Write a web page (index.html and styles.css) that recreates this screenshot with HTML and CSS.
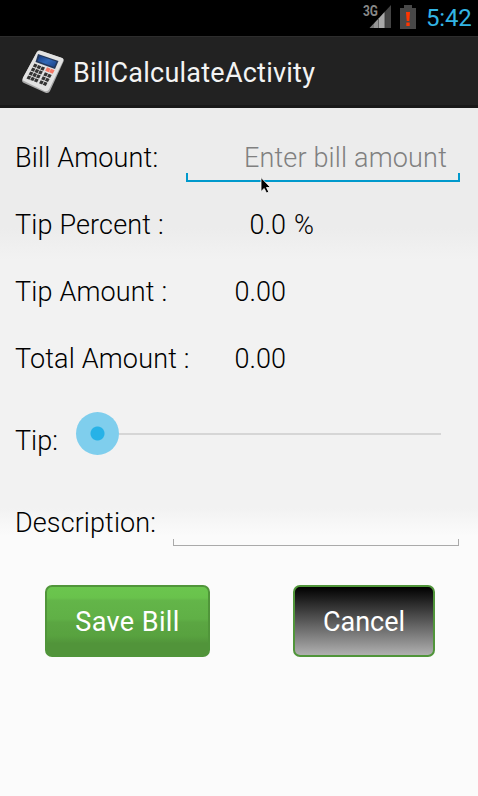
FILE: index.html
```html
<!DOCTYPE html>
<html lang="en">
<head>
<meta charset="utf-8">
<title>BillCalculateActivity</title>
<link rel="stylesheet" href="styles.css">
</head>
<body>
<header class="status">
  <svg class="signal" width="28" height="24" viewBox="0 0 28 24">
    <path d="M6.500 24 11 19.300V24Z" fill="#777"/><path d="M11 19.300 16 14V24H11Z" fill="#959595"/><path d="M16 14 21 8.500V24H16Z" fill="#a8a8a8"/><path d="M21 8.500 22.500 7V24H21Z" fill="#777"/><path d="M15 15 16 14V24H15Z" fill="#666"/><path d="M22.500 7 28 1V24H22.500Z" fill="#444"/>
    <text x="0" y="11.500" textLength="15" lengthAdjust="spacingAndGlyphs">3G</text>
  </svg>
  <svg class="battery" width="16" height="24" viewBox="0 0 16 24">
    <path d="M4 0H12V3H16V24H0V3H4Z" fill="#484848"/><path d="M6 7H10L9.300 16H6.700Z" fill="#ff3500"/><rect x="6.300" y="17.500" width="3.400" height="3.500" fill="#ff3500"/>
  </svg>
  <span class="clock">5:42</span>
</header>
<div class="bar">
  <svg class="logo" width="44" height="46" viewBox="0 0 44 46">
    <defs><linearGradient id="lcd" x2="1" y2="1"><stop offset="0" stop-color="#153a80"/><stop offset=".5" stop-color="#3269b8"/><stop offset="1" stop-color="#193f86"/></linearGradient></defs>
    <path d="M15.500 3.500Q17 1 20 2L41 9Q43.500 10 42.500 12.500L29 42Q27.500 45 24 43.500L3 34Q0 32.500 1.500 30Z" fill="#aaa"/>
    <path d="M16 3Q17 1 20 1.700L40.500 8.700Q43 9.700 42 12L28 40.500Q26.500 43 23.500 42L3 32Q1 31 2 28.500Z" fill="#e2e2e2"/>
    <path d="M17 5 37.500 12 34 20 14.500 13Z" fill="#24395c"/>
    <path d="M18.800 6.800 35.500 12.800 33 18 16.500 12Z" fill="url(#lcd)"/>
    <g transform="matrix(.93 .36 -.47 .88 13.500 14.500)" fill="#333">
      <path d="M0 0h3.300v3.500h-3.300zM4 0h3.300v3.500h-3.300zM8 0h3.300v3.500h-3.300zM0 4.500h3.300v3.500h-3.300zM4 4.500h3.300v3.500h-3.300zM8 4.500h3.300v3.500h-3.300zM0 9h3.300v3.500h-3.300zM4 9h3.300v3.500h-3.300zM8 9h3.300v3.500h-3.300zM0 13.500h3.300v3.500h-3.300zM4 13.500h3.300v3.500h-3.300zM8 13.500h3.300v3.500h-3.300zM13.500 4.500h3.300v3.500h-3.300zM17.500 4.500h3.300v3.500h-3.300zM13.500 9h3.300v3.500h-3.300zM17.500 9h3.300v3.500h-3.300zM13.500 13.500h3.300v3.500h-3.300zM17.500 13.500h3.300v3.500h-3.300z"/>
      <path d="M13 -1h3.800v4h-3.800zM17.300 -1h3.800v4h-3.800z" fill="#f47866"/>
    </g>
  </svg>
  <h1>BillCalculateActivity</h1>
</div>
<main>
  <div class="row">
    <label class="w-bill">Bill Amount:</label>
    <div class="field amount"><span>Enter bill amount</span>
      <svg class="cursor" width="12" height="18" viewBox="0 0 12 18"><path d="M1 .5V14.500L4.200 11.500 6.500 16 8.800 15 6.500 10.500H10.500Z" fill="#000" stroke="#fff" stroke-width=".8"/></svg>
    </div>
  </div>
  <div class="row"><span class="w-long">Tip Percent :</span><span class="value">0.0</span><span class="percent">%</span></div>
  <div class="row"><span class="w-long">Tip Amount :</span><span class="value">0.00</span></div>
  <div class="row"><span class="w-long">Total Amount :</span><span class="value">0.00</span></div>
  <div class="row tip"><span class="w-tip">Tip:</span><div class="slider"><i class="thumb"></i><i class="track"></i></div></div>
  <div class="row desc"><label class="w-desc">Description:</label><div class="field plain"></div></div>
  <div class="actions"><button class="save">Save Bill</button><button class="cancel">Cancel</button></div>
</main>
</body>
</html>
```
FILE: styles.css
```css
* { box-sizing: border-box; }
body {
  margin: 0;
  height: 796px;
  overflow: hidden;
  font: 300 27px/32px Roboto, sans-serif;
  color: #000;
  background: #fbfbfb;
}
.status {
  height: 36px;
  background: #000;
  display: flex;
  align-items: flex-start;
  padding: 5px 7px 0 0;
  justify-content: flex-end;
}
.signal { overflow: visible; margin: -1px 9px 0 0; }
.signal text { font: 700 14px Roboto, sans-serif; fill: #888; }
.battery { margin-right: 10px; }
.clock { font-weight: 400; font-size: 24px; line-height: 28px; color: #33b5e5; margin-top: -1px; width: 45px; white-space: nowrap; letter-spacing: -0.2px; }
.bar {
  height: 72px;
  background: #222;
  border-top: 1px solid #2d2d2d;
  border-bottom: 3px solid #191919;
  display: flex;
  align-items: center;
  padding-left: 21px;
}
.logo { margin: 2px 8px 0 0; }
h1 { margin: 3px 0 0; font-weight: 400; font-size: 27px; color: #f3f3f3; letter-spacing: 0.24px; }
main {
  height: 688px;
  padding: 16px 18px 0 15px;
  background: linear-gradient(#ececec 0, #ececec 120px, #f2f2f2 152px, #f2f2f2 400px, #fbfbfb 428px);
}
.row { height: 67px; display: flex; align-items: center; white-space: nowrap; }
.w-bill, .w-long { letter-spacing: 0.16px; }
.w-bill { width: 171px; }
.w-long { width: 180px; }
.w-tip { width: 42px; }
.w-desc { width: 140px; letter-spacing: 0.1px; }
.value { width: 91px; text-align: right; }
.percent { margin-left: 8px; }
.field { position: relative; flex: 1; }
.field::after {
  content: "";
  position: absolute;
  inset: auto 0 0;
  height: 7px;
  border: 2px solid #0099cc;
  border-top: 0;
}
.amount { height: 47px; margin-top: 1px; text-align: right; padding: 7px 13px 0 0; color: #808080; letter-spacing: 0.17px; }
.cursor { position: absolute; left: 74px; top: 42px; z-index: 1; }
.tip { height: 82px; margin-top: 8px; }
.slider { display: flex; align-items: center; flex: 1; margin: -15px 19px 0 18.5px; }
.thumb { width: 43px; height: 43px; border-radius: 50%; background: radial-gradient(circle, #27b2e7 6.5px, #7fceed 7.5px); }
.track { flex: 1; height: 2px; background: #d6d6d6; }
.desc { height: 82px; }
.plain { margin-left: 18px; height: 48px; margin-right: 1px; margin-top: -2px; }
.plain::after { height: 6px; border: 1px solid #aaa; border-top: 0; }
.actions { display: flex; gap: 83px; margin: 21px 0 0 30px; }
button {
  height: 72px;
  padding: 2px 0 0;
  border: 2px solid #50953a;
  border-radius: 7px;
  font: 400 27px Roboto, sans-serif;
  color: #fff;
}
.save { width: 165px; letter-spacing: 0.4px; background: linear-gradient(#6bc64e 0, #69c24c 16%, #63b549 20%, #60b046 47%, #5ba642 52%, #58a23f 72%, #51943a 83%, #51943a); }
.cancel { width: 142px; background: linear-gradient(#000, #b0b0b0); }
```
